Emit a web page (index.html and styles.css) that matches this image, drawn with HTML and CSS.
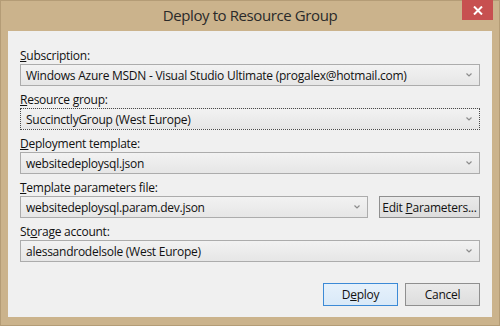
FILE: index.html
```html
<!DOCTYPE html>
<html lang="en">
<head>
  <meta charset="UTF-8">
  <title>Deploy to Resource Group</title>
  <link rel="stylesheet" href="styles.css">
</head>
<body>
  <div class="window">
    <div class="titlebar">
      <span></span>
      <h1 class="title">Deploy to Resource Group</h1>
      <button class="close" aria-label="Close">
        <svg width="10" height="9" viewBox="0 0 10 9"><path d="M1 0.5 L9 8.5 M9 0.5 L1 8.5" stroke="#fff" stroke-width="2"/></svg>
      </button>
    </div>
    <div class="client">
      <div class="field">
        <label class="label"><u>S</u>ubscription:</label>
        <div class="combo">
          <span>Windows Azure MSDN - Visual Studio Ultimate (progalex@hotmail.com)</span>
          <svg class="chev" width="6" height="4" viewBox="0 0 6 4"><path d="M0.5 0.5 L3 3 L5.5 0.5" fill="none" stroke="#8c8c8c" stroke-width="1.2"/></svg>
        </div>
      </div>
      <div class="field">
        <label class="label"><u>R</u>esource group:</label>
        <div class="combo focused">
          <span>SuccinctlyGroup (West Europe)</span>
          <svg class="chev" width="6" height="4" viewBox="0 0 6 4"><path d="M0.5 0.5 L3 3 L5.5 0.5" fill="none" stroke="#8c8c8c" stroke-width="1.2"/></svg>
        </div>
      </div>
      <div class="field">
        <label class="label"><u>D</u>eployment template:</label>
        <div class="combo">
          <span>websitedeploysql.json</span>
          <svg class="chev" width="6" height="4" viewBox="0 0 6 4"><path d="M0.5 0.5 L3 3 L5.5 0.5" fill="none" stroke="#8c8c8c" stroke-width="1.2"/></svg>
        </div>
      </div>
      <div class="field">
        <label class="label"><u>T</u>emplate parameters file:</label>
        <div class="row">
          <div class="combo">
            <span>websitedeploysql.param.dev.json</span>
            <svg class="chev" width="6" height="4" viewBox="0 0 6 4"><path d="M0.5 0.5 L3 3 L5.5 0.5" fill="none" stroke="#8c8c8c" stroke-width="1.2"/></svg>
          </div>
          <button class="btn edit">Edit <u>P</u>arameters...</button>
        </div>
      </div>
      <div class="field">
        <label class="label">St<u>o</u>rage account:</label>
        <div class="combo">
          <span>alessandrodelsole (West Europe)</span>
          <svg class="chev" width="6" height="4" viewBox="0 0 6 4"><path d="M0.5 0.5 L3 3 L5.5 0.5" fill="none" stroke="#8c8c8c" stroke-width="1.2"/></svg>
        </div>
      </div>
      <div class="actions">
        <button class="btn default">D<u>e</u>ploy</button>
        <button class="btn">Cancel</button>
      </div>
    </div>
  </div>
</body>
</html>
```

FILE: styles.css
```css
* {
  box-sizing: border-box;
}
body {
  margin: 0;
  background: #cbb38c;
  font-family: "Open Sans", "Noto Sans", sans-serif;
  font-size: 12px;
  letter-spacing: -0.25px;
  color: #111;
}
.window {
  width: 500px;
  height: 326px;
  display: flex;
  flex-direction: column;
  background: #cbb38c;
  border: 1px solid #b49c76;
}
.titlebar {
  height: 30px;
  display: grid;
  grid-template-columns: 1fr auto 1fr;
}
.title {
  margin: 0;
  font-size: 15px;
  font-weight: 400;
  letter-spacing: -0.4px;
  line-height: 28px;
  color: #2a2a2a;
}
.close {
  justify-self: end;
  align-self: start;
  width: 31px;
  height: 20px;
  margin: -1px 6px 0 0;
  padding: 0;
  border: none;
  background: #c75050;
  display: flex;
  align-items: center;
  justify-content: center;
}
.client {
  flex: 1;
  margin: 0 7px 8px;
  background: #f0f0f0;
  padding: 16px 12px 11px;
  display: flex;
  flex-direction: column;
  gap: 5px;
}
.field {
  display: flex;
  flex-direction: column;
}
.label {
  height: 17px;
  line-height: 17px;
}
u {
  text-underline-offset: 1px;
}
.combo {
  height: 22px;
  display: flex;
  align-items: center;
  justify-content: space-between;
  padding: 0 7px 0 5px;
  border: 1px solid #acacac;
  background: linear-gradient(#f2f2f2, #e6e6e6);
}
.combo.focused {
  border: 1px dotted #4a4a4a;
}
.chev {
  flex: none;
}
.row {
  display: flex;
  gap: 11px;
}
.row .combo {
  flex: 1;
}
.btn {
  font: inherit;
  letter-spacing: inherit;
  color: #111;
  height: 22px;
  padding: 0;
  border: 1px solid #8f8f8f;
  background: linear-gradient(#eaeaea, #dddddd);
}
.edit {
  width: 101px;
}
.actions {
  margin-top: auto;
  display: flex;
  justify-content: flex-end;
  gap: 7px;
}
.actions .btn {
  width: 75px;
  height: 23px;
}
.btn.default {
  border-color: #3c8ad6;
  background: linear-gradient(#e6f1fb, #d9e9f8);
}
```
